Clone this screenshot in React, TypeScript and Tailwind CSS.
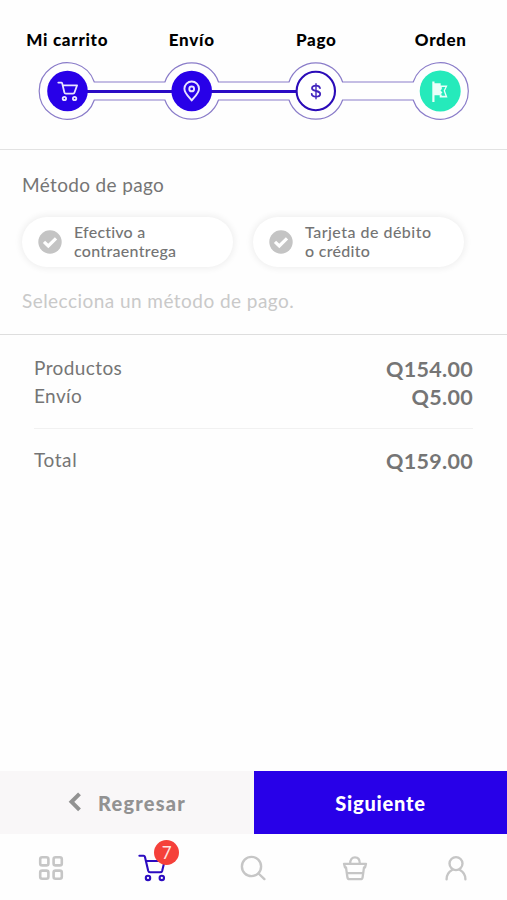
import React from 'react';

interface Step {
  id: string;
  label: string;
}

interface Method {
  id: string;
  lines: { text: string; tracking: string }[];
}

const steps: Step[] = [
  { id: 'cart', label: 'Mi carrito' },
  { id: 'shipping', label: 'Envío' },
  { id: 'payment', label: 'Pago' },
  { id: 'order', label: 'Orden' },
];

const methods: Method[] = [
  {
    id: 'cash',
    lines: [
      { text: 'Efectivo a', tracking: 'tracking-[0.2px]' },
      { text: 'contraentrega', tracking: 'tracking-[0.3px]' },
    ],
  },
  {
    id: 'card',
    lines: [
      { text: 'Tarjeta de débito', tracking: 'tracking-[0.48px]' },
      { text: 'o crédito', tracking: 'tracking-[0.3px]' },
    ],
  },
];

const CartIcon: React.FC<{ className?: string }> = ({ className }) => (
  <svg viewBox="0 0 28 28" className={className} fill="none" stroke="currentColor" strokeWidth="2.1" strokeLinecap="round" strokeLinejoin="round">
    <path d="M1.4 1.8h4.2q1 0 1.3 1l3.3 14q.4 1.5 1.8 1.5h10.2q1.5 0 2-1.5L26.6 7H8.2" />
    <circle cx="10" cy="23.9" r="2.2" />
    <circle cx="23.8" cy="23.9" r="2.2" />
  </svg>
);

const ProgressTrack: React.FC = () => (
  <svg width="507" height="60" viewBox="0 0 507 60" className="block" fill="none">
    <path
      d="M94.3 21H164.9A28.3 28.3 0 0 1 218.5 21H289A28.3 28.3 0 0 1 342.6 21H413.2A28.3 28.3 0 1 1 413.2 39H342.6A28.3 28.3 0 0 1 289 39H218.5A28.3 28.3 0 0 1 164.9 39H94.3A28.3 28.3 0 1 1 94.3 21Z"
      stroke="#8a7cc9"
      strokeWidth="1.2"
    />
    <path d="M67.5 30.5H296" stroke="#2a0bc4" strokeWidth="2.8" />
    <circle cx="67.5" cy="30" r="20.3" fill="#2800e8" />
    <circle cx="191.7" cy="30" r="20.3" fill="#2800e8" />
    <circle cx="315.8" cy="30" r="19.2" fill="#fff" stroke="#2a0bb8" strokeWidth="2.1" />
    <circle cx="440.2" cy="30" r="20.5" fill="#25eabb" />
    {/* cart */}
    <g stroke="#e9e4ff" strokeWidth="1.8" strokeLinecap="round" strokeLinejoin="round">
      <path d="M58.3 21.6h2.9q.8 0 1 .8l2.2 9.1q.3 1.1 1.4 1.1h7.3q1.1 0 1.4-1.1l2.6-7.2H62.7" />
      <circle cx="64.4" cy="37.5" r="1.7" />
      <circle cx="74.6" cy="37.5" r="1.7" />
    </g>
    {/* pin */}
    <g stroke="#e9e4ff" strokeWidth="1.9" strokeLinejoin="round">
      <path d="M191.7 39.5c-2.2-3-7.3-7.2-7.3-11.7a7.3 7.3 0 0 1 14.6 0c0 4.5-5.1 8.7-7.3 11.7Z" />
      <circle cx="191.7" cy="27.9" r="2.4" />
    </g>
    {/* dollar */}
    <g stroke="#4124bd" strokeWidth="1.8" strokeLinecap="round">
      <path d="M320 27.2c-.3-1.8-1.9-2.6-4-2.6-2.4 0-4 .9-4 2.6 0 1.9 1.8 2.3 4 2.8 2.4.5 4.2 1.1 4.2 3 0 1.8-1.8 2.7-4.2 2.7s-4.2-1-4.3-2.9" />
      <path d="M316 22.8v15" strokeWidth="1.4" />
    </g>
    {/* flag */}
    <path d="M432.3 20.5h2.2v1.8h6.2v2.1h6.8l-2.5 5.4 2.5 6.6h-7.8v-2.1h-5.2v6.6h-2.2Z" fill="#eafff9" />
    <path d="M441.8 26h3.6l-1.8 3.8 1.8 5h-3.7v-1.2h-1.2l2-2-2-2 1.3-1.5Z" fill="#25eabb" />
  </svg>
);

const CheckoutPage: React.FC = () => {
  return (
    <main className="flex h-[900px] w-[507px] flex-col overflow-hidden bg-[#fefefe] font-['Lato',sans-serif] text-[#757575]">
      <header className="h-[150px] shrink-0 border-b border-[#e2e2e2] pt-7">
        <div className="ml-[5px] grid w-[498px] grid-cols-4 text-center text-[17px] leading-[23px] font-black tracking-[0.7px] text-black">
          {steps.map((step) => (
            <span key={step.id}>{step.label}</span>
          ))}
        </div>
        <div className="mt-[10px]">
          <ProgressTrack />
        </div>
      </header>

      <section className="h-[185px] shrink-0 border-b border-[#dedede] px-[22px] pt-[23px]">
        <h2 className="text-[19px] leading-6 font-normal tracking-[0.35px]">Método de pago</h2>
        <div className="mt-[20px] flex gap-5">
          {methods.map((method) => (
            <button
              key={method.id}
              className="flex h-[50px] w-[211px] items-center rounded-full bg-white pl-4 text-left text-[16px] leading-[19px] font-medium text-[#747474] shadow-[0_0_6px_2px_rgba(0,0,0,0.06)]"
            >
              <svg viewBox="0 0 24 24" className="mr-3 size-6 shrink-0">
                <circle cx="12" cy="12" r="11.7" fill="#c4c4c4" />
                <path d="m6 11.8 4.3 4.1 7.7-7.6" fill="none" stroke="#fff" strokeWidth="3.2" />
              </svg>
              <span className="flex flex-col pb-[3px]">
                {method.lines.map((line) => (
                  <span key={line.text} className={line.tracking}>{line.text}</span>
                ))}
              </span>
            </button>
          ))}
        </div>
        <p className="mt-[22px] text-[19px] leading-6 tracking-[0.45px] text-[#c9c9c9]">Selecciona un método de pago.</p>
      </section>

      <section className="flex-1 px-[34px] pt-5">
        <div className="flex h-7 items-center justify-between">
          <span className="pb-0.5 text-[19px] tracking-[0.4px]">Productos</span>
          <span className="text-[21.5px] font-bold tracking-[0.3px]">Q154.00</span>
        </div>
        <div className="flex h-7 items-center justify-between">
          <span className="pb-0.5 text-[19px] tracking-[0.4px]">Envío</span>
          <span className="text-[21.5px] font-bold tracking-[0.3px]">Q5.00</span>
        </div>
        <div className="mt-[17px] border-t border-[#f1f1f1]" />
        <div className="mt-[18px] flex h-7 items-center justify-between">
          <span className="pb-0.5 text-[19px] tracking-[0.6px]">Total</span>
          <span className="text-[21.5px] font-bold tracking-[0.3px]">Q159.00</span>
        </div>
      </section>

      <div className="flex h-[63px] shrink-0 text-[20px] font-black">
        <button className="flex w-[254px] items-center bg-[#f9f7f8] pl-[68px] tracking-[1.2px] text-[#929292]">
          <svg viewBox="0 0 13 20" className="mr-[17px] mb-px h-5 w-[13px]" fill="none" stroke="currentColor" strokeWidth="4">
            <path d="m11.5 1.8-8 8 8 8" />
          </svg>
          Regresar
        </button>
        <button className="flex-1 bg-[#2800e8] tracking-[0.8px] text-white">Siguiente</button>
      </div>

      <nav className="grid h-[66px] shrink-0 grid-cols-5 items-center justify-items-center pt-0.5 text-[#c6c6c6]">
        <svg viewBox="0 0 26 26" className="size-[26px]" fill="none" stroke="currentColor" strokeWidth="2.6">
          <rect x="2.2" y="2.2" width="8.2" height="8.2" rx="2" />
          <rect x="15.6" y="2.2" width="8.2" height="8.2" rx="2" />
          <rect x="2.2" y="15.6" width="8.2" height="8.2" rx="2" />
          <rect x="15.6" y="15.6" width="8.2" height="8.2" rx="2" />
        </svg>
        <div className="relative">
          <CartIcon className="size-7 text-[#2b0bc0]" />
          <span className="absolute -top-[14px] left-[16px] flex size-[25px] items-center justify-center rounded-full bg-[#f5403a] text-[17px] text-[#ffe5e2]">
            7
          </span>
        </div>
        <svg viewBox="0 0 26 26" className="size-[26px]" fill="none" stroke="currentColor" strokeWidth="2.4" strokeLinecap="round">
          <circle cx="11.5" cy="11.5" r="9.6" />
          <path d="m18.5 18.5 5.9 5.6" />
        </svg>
        <svg viewBox="0 0 26 26" className="size-[26px]" fill="none" stroke="currentColor" strokeWidth="2.3" strokeLinejoin="round">
          <path d="M2 8.8h22l-1 3.6h-1l-1.4 9.9q-.3 1.9-2.2 1.9H7.6q-1.9 0-2.2-1.9L4 12.4H3Z" />
          <path d="M8.2 8.5C8.2 4.4 10 2.3 13 2.3s4.8 2.1 4.8 6.2M5 18.2h16" />
        </svg>
        <svg viewBox="0 0 26 26" className="size-[26px]" fill="none" stroke="currentColor" strokeWidth="2.4" strokeLinecap="round">
          <circle cx="13" cy="8.6" r="6.5" />
          <path d="M3.6 24.3c0-4.6 2-7.4 5.4-9.3M22.4 24.3c0-4.6-2-7.4-5.4-9.3" />
        </svg>
      </nav>
    </main>
  );
};

export default CheckoutPage;
